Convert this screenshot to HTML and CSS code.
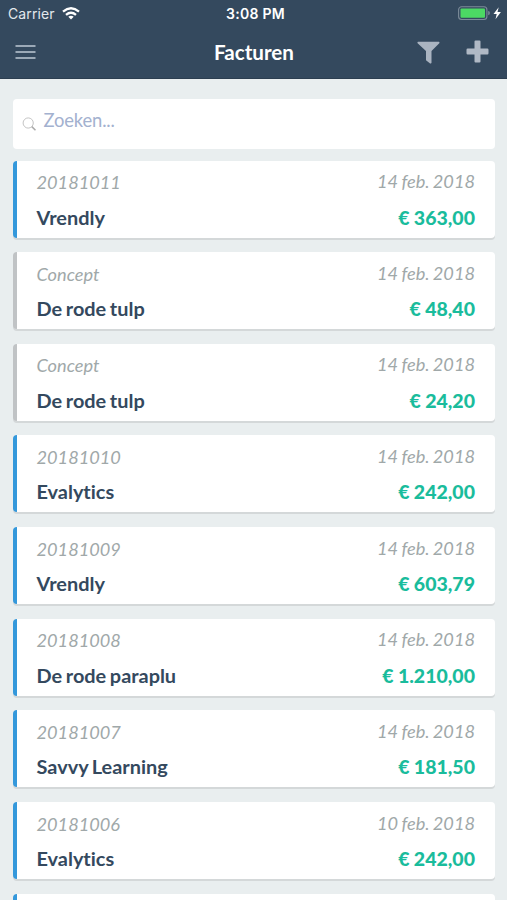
FILE: index.html
```html
<!DOCTYPE html>
<html lang="nl">
<head>
<meta charset="utf-8">
<title>Facturen</title>
<link rel="stylesheet" href="styles.css">
</head>
<body>
<header class="top">
  <div class="status">
    <div class="carrier"><span>Carrier</span>
      <svg width="18" height="13" viewBox="0 0 18 13" fill="none" stroke="#fff" stroke-width="2.3"><path d="M1 4.6Q9-2 17 4.6M4 7.8Q9 3.6 14 7.8"/><path d="M6.3 9.7Q9 7.8 11.7 9.7L9 12.6Z" fill="#fff" stroke="none"/></svg>
    </div>
    <div class="clock">3:08 PM</div>
    <div class="power">
      <svg width="44" height="15" viewBox="0 0 44 15"><rect x=".6" y=".7" width="28.3" height="12.8" rx="3" fill="none" stroke="#7c8b99" stroke-width="1.1"/><rect x="2.5" y="2.5" width="24.5" height="9.2" rx="1" fill="#4cd964"/><path d="M30.2 5q1.7.2 1.7 2.1t-1.7 2.1z" fill="#7c8b99"/><path d="M40.7 1.2L35.5 8h3.200l-1.200 5.200 5.400-7.200h-3.400z" fill="#fff"/></svg>
    </div>
  </div>
  <nav class="nav">
    <svg class="menu" width="21" height="16" viewBox="0 0 21 16" stroke="#9ba9b7" stroke-width="2"><path d="M.5 2h20M.5 8h20M.5 14h20"/></svg>
    <h1 class="title">Facturen</h1>
    <div class="actions">
      <svg class="filter" width="23" height="24" viewBox="0 0 23 24" fill="#aab4c1"><path d="M1 .8h21q1 .5.3 1.500L14.500 10v11.800q-.3 1.200-1.400.6L9 19.300V10L.6 2.300Q0 1.200 1 .8z"/></svg>
      <svg width="23" height="23" viewBox="0 0 23 23" fill="#b0b9c5"><path d="M9.500.5h4q1 0 1 1V8.500H21.300q1.200 0 1.200 1.200v3.600q0 1.200-1.200 1.200H14.500v7q0 1-1 1h-4q-1 0-1-1v-7H1.700Q.5 14.500.5 13.300V9.700Q.5 8.500 1.700 8.500H8.500v-7q0-1 1-1z"/></svg>
    </div>
  </nav>
</header>
<main class="list">
  <div class="search">
    <svg width="15" height="15" viewBox="0 0 15 15" fill="none" stroke="#c4c4c4"><circle cx="6.2" cy="6" r="5.1"/><path d="M9.800 9.600l3.700 3.700" stroke="#aaa" stroke-width="1.500"/></svg>
    <span>Zoeken...</span>
  </div>
  <article class="card"><div class="meta"><span>20181011</span><time>14 feb. 2018</time></div><div class="main"><span>Vrendly</span><b>€ 363,00</b></div></article>
  <article class="card concept"><div class="meta"><span>Concept</span><time>14 feb. 2018</time></div><div class="main"><span>De rode tulp</span><b>€ 48,40</b></div></article>
  <article class="card concept"><div class="meta"><span>Concept</span><time>14 feb. 2018</time></div><div class="main"><span>De rode tulp</span><b>€ 24,20</b></div></article>
  <article class="card"><div class="meta"><span>20181010</span><time>14 feb. 2018</time></div><div class="main"><span>Evalytics</span><b>€ 242,00</b></div></article>
  <article class="card"><div class="meta"><span>20181009</span><time>14 feb. 2018</time></div><div class="main"><span>Vrendly</span><b>€ 603,79</b></div></article>
  <article class="card"><div class="meta"><span>20181008</span><time>14 feb. 2018</time></div><div class="main"><span>De rode paraplu</span><b>€ 1.210,00</b></div></article>
  <article class="card"><div class="meta"><span>20181007</span><time>14 feb. 2018</time></div><div class="main"><span>Savvy Learning</span><b>€ 181,50</b></div></article>
  <article class="card"><div class="meta"><span>20181006</span><time>10 feb. 2018</time></div><div class="main"><span>Evalytics</span><b>€ 242,00</b></div></article>
  <article class="card"></article>
</main>
</body>
</html>
```
FILE: styles.css
```css
* { box-sizing: border-box; }
body {
  margin: 0;
  height: 900px;
  overflow: hidden;
  background: #e9eeef;
  font-family: Lato, sans-serif;
  font-variant-ligatures: none;
  color: #34495e;
}
svg { display: block; flex: none; }
.top { height: 79px; background: #34495e; border-bottom: 1px solid #2c3e50; }
.status {
  height: 27px;
  display: grid;
  grid-template-columns: 1fr auto 1fr;
  align-items: center;
  padding: 0 5px 0 8px;
  font: 14px/27px Inter, sans-serif;
  color: #fff;
}
.carrier { display: flex; align-items: center; gap: 7px; color: #e3e8ed; letter-spacing: .1px; }
.clock { padding-left: 1px; font-weight: 600; font-size: 14px; letter-spacing: .3px; }
.power { display: flex; justify-content: flex-end; }
.nav {
  height: 49px;
  display: grid;
  grid-template-columns: 1fr auto 1fr;
  align-items: center;
  padding: 0 18px 0 15px;
}
.title { margin: 0; padding-left: 4px; font-size: 20.600px; line-height: 24px; font-weight: 700; color: #fff; }
.actions { display: flex; justify-content: flex-end; align-items: flex-start; gap: 26px; padding-top: 2px; }
.filter { margin-top: 1px; }
.list { display: flex; flex-direction: column; height: 821px; overflow: hidden; padding: 19.500px 12px 0 13px; }
.search {
  flex: none;
  height: 50px;
  margin-bottom: 12px;
  padding: 0 9px;
  display: flex;
  gap: 6.500px;
  background: #fff;
  border-radius: 4px;
  font-size: 18.400px;
  letter-spacing: -.15px;
  line-height: 43px;
  color: #a3b1cf;
}
.search svg { margin-top: 18px; }
.card {
  flex: none;
  height: 77px;
  margin-bottom: 14.630px;
  padding: 8.700px 20px 0 19.500px;
  background: #fff;
  border-left: 4px solid #3498db;
  border-radius: 4px;
  box-shadow: 0 2px 0 #d4d8d9;
}
.concept { border-left-color: #c0c3c5; }
.meta, .main { display: flex; justify-content: space-between; }
.meta { font-size: 18.200px; line-height: 26px; font-style: italic; color: #a0a8a9; }
.meta time { margin-top: -1px; word-spacing: -1px; }
.main { align-items: baseline; margin-top: 7.400px; font-size: 19.900px; line-height: 28px; font-weight: 700; word-spacing: -1.200px; }
.main b { font-size: 19.500px; word-spacing: -.3px; color: #1abc9c; }
```
